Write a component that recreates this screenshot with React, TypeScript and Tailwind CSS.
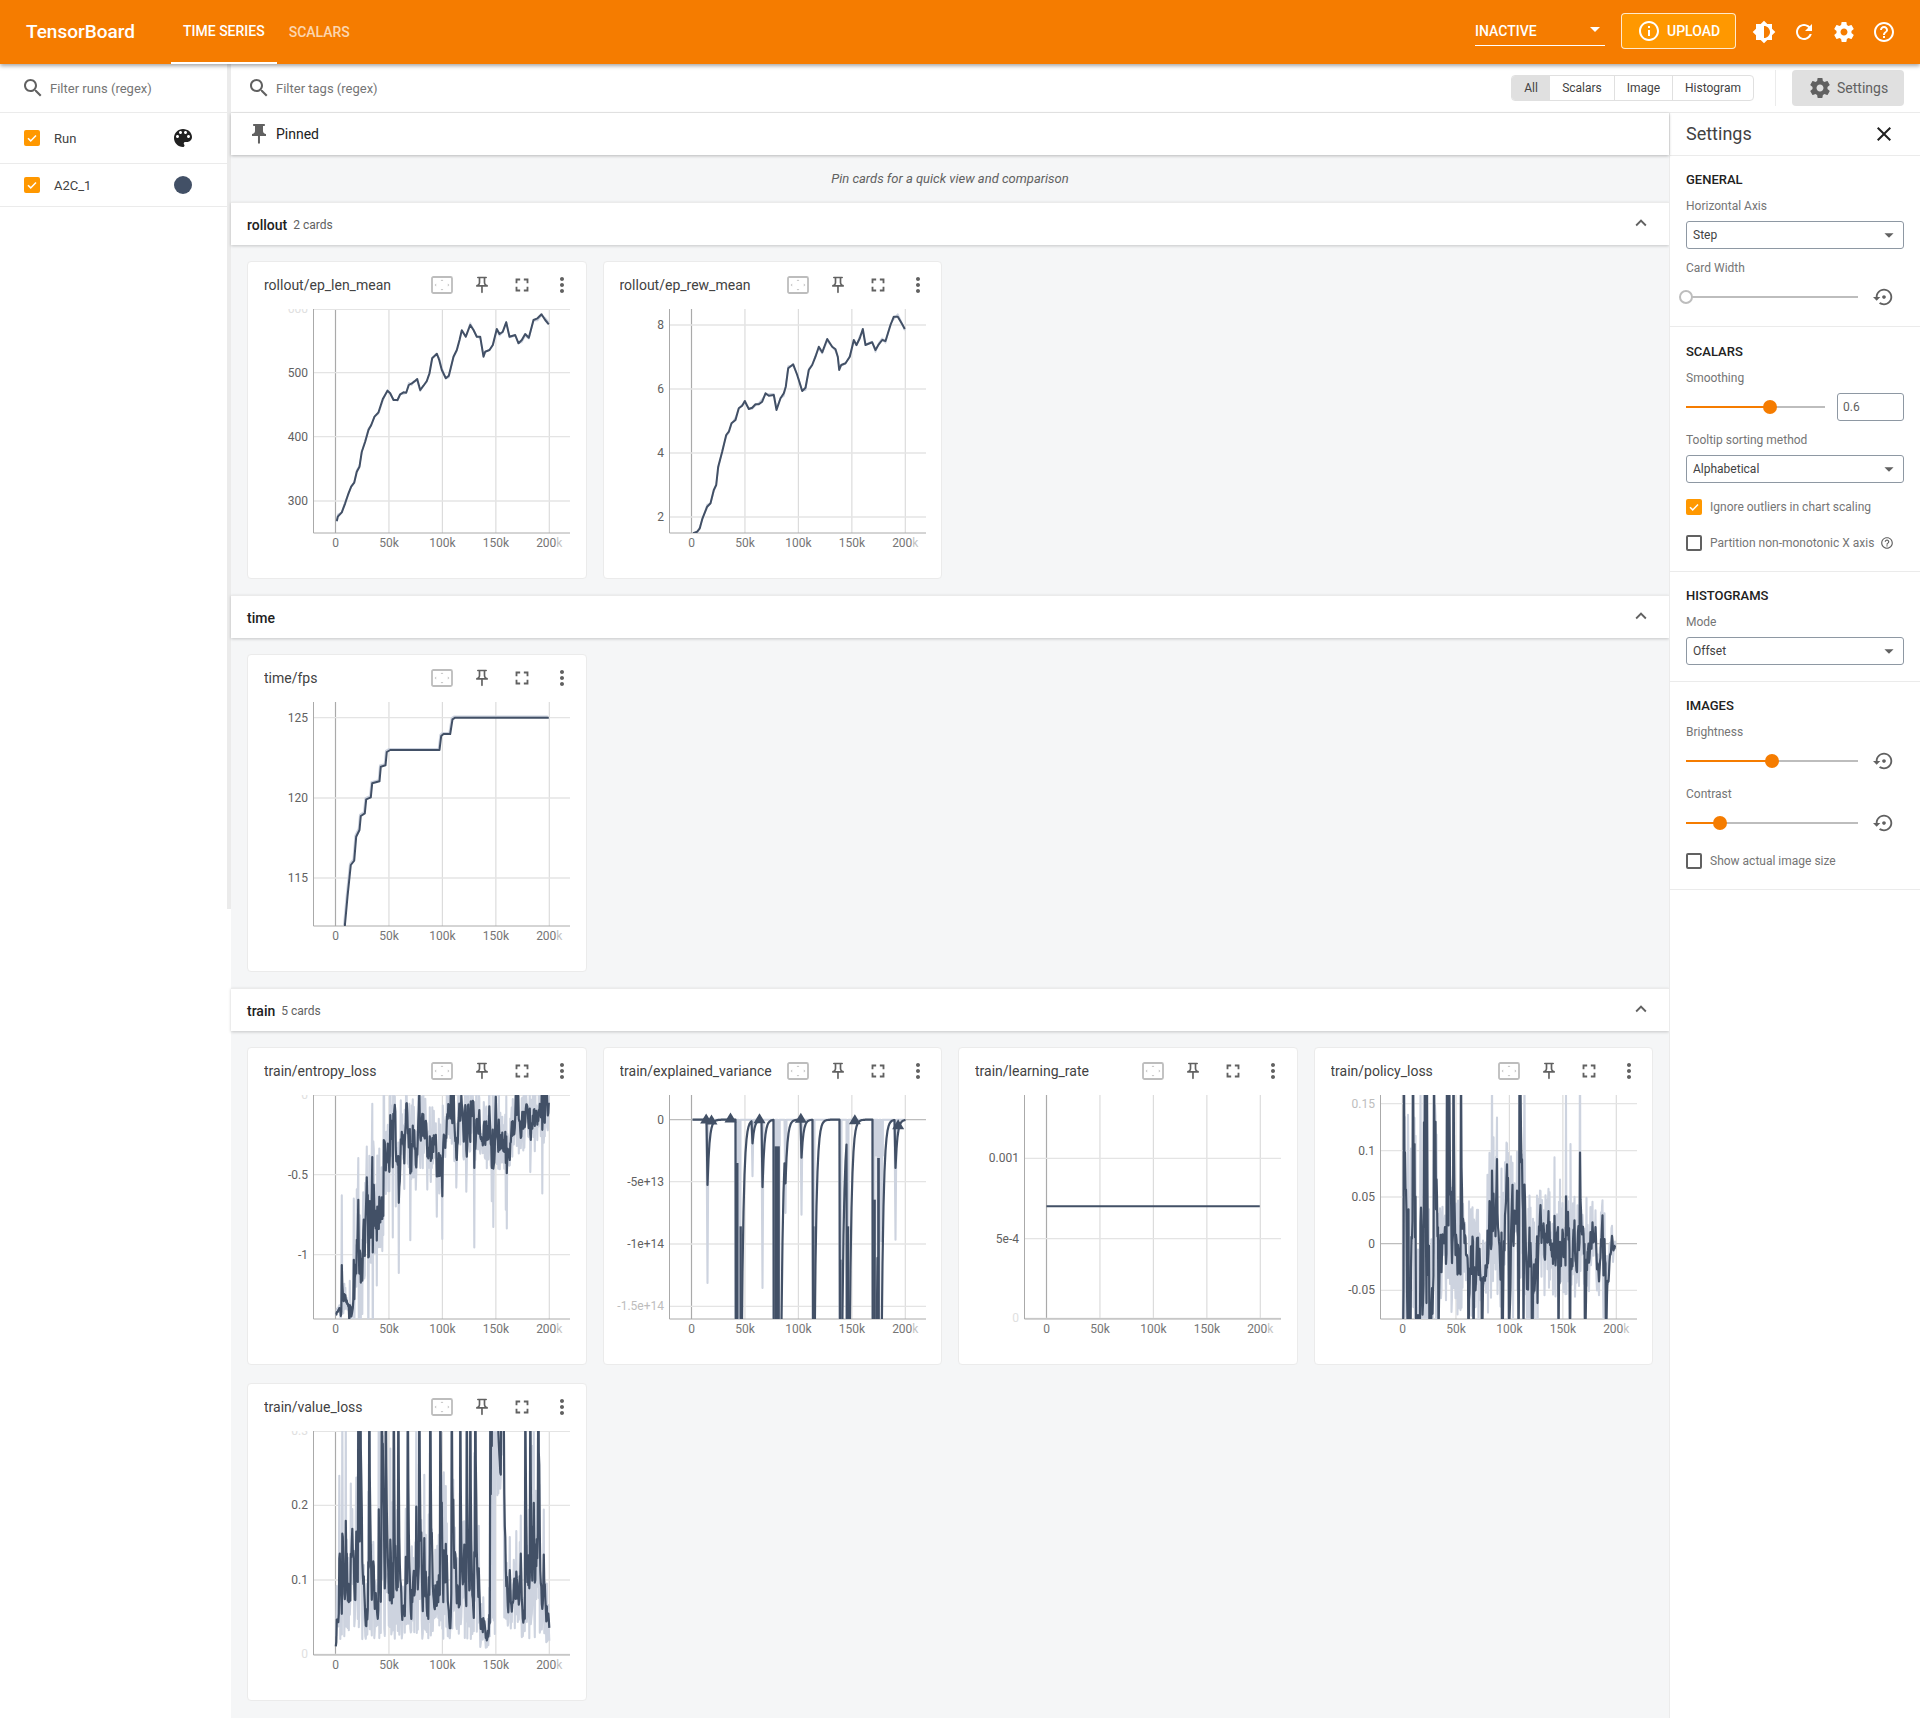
import { ReactNode } from 'react'

const ICONS = {
  search: 'M15.5 14h-.79l-.28-.27C15.41 12.59 16 11.11 16 9.5 16 5.91 13.09 3 9.5 3S3 5.91 3 9.5 5.91 16 9.5 16c1.61 0 3.09-.59 4.23-1.57l.27.28v.79l5 4.99L20.49 19l-4.99-5zm-6 0C7.01 14 5 11.99 5 9.5S7.01 5 9.5 5 14 7.01 14 9.5 11.99 14 9.5 14z',
  palette: 'M12 3c-4.97 0-9 4.03-9 9s4.03 9 9 9c.83 0 1.5-.67 1.5-1.5 0-.39-.15-.74-.39-1.01-.23-.26-.38-.61-.38-.99 0-.83.67-1.5 1.5-1.5H16c2.76 0 5-2.24 5-5 0-4.42-4.03-8-9-8zm-5.5 9c-.83 0-1.5-.67-1.5-1.5S5.67 9 6.5 9 8 9.67 8 10.5 7.33 12 6.5 12zm3-4C8.67 8 8 7.33 8 6.5S8.67 5 9.5 5s1.5.67 1.5 1.5S10.33 8 9.5 8zm5 0c-.83 0-1.5-.67-1.5-1.5S13.67 5 14.5 5s1.5.67 1.5 1.5S15.33 8 14.5 8zm3 4c-.83 0-1.5-.67-1.5-1.5S16.67 9 17.5 9s1.5.67 1.5 1.5-.67 1.5-1.5 1.5z',
  pin: 'M16 9V4h1c.55 0 1-.45 1-1s-.45-1-1-1H7c-.55 0-1 .45-1 1s.45 1 1 1h1v5c0 1.66-1.34 3-3 3v2h5.97v7l1 1 1-1v-7H19v-2c-1.66 0-3-1.34-3-3z',
  pinOutline: 'M14 4v5c0 1.12.37 2.16 1 3H9c.65-.86 1-1.9 1-3V4h4m3-2H7c-.55 0-1 .45-1 1s.45 1 1 1h1v5c0 1.66-1.34 3-3 3v2h5.97v7l1 1 1-1v-7H19v-2c-1.66 0-3-1.34-3-3V4h1c.55 0 1-.45 1-1s-.45-1-1-1z',
  fullscreen: 'M7 14H5v5h5v-2H7v-3zm-2-4h2V7h3V5H5v5zm12 7h-3v2h5v-5h-2v3zM14 5v2h3v3h2V5h-5z',
  more: 'M12 8c1.1 0 2-.9 2-2s-.9-2-2-2-2 .9-2 2 .9 2 2 2zm0 2c-1.1 0-2 .9-2 2s.9 2 2 2 2-.9 2-2-.9-2-2-2zm0 6c-1.1 0-2 .9-2 2s.9 2 2 2 2-.9 2-2-.9-2-2-2z',
  expandLess: 'M12 8l-6 6 1.41 1.41L12 10.83l4.59 4.58L18 14z',
  close: 'M19 6.41L17.59 5 12 10.59 6.41 5 5 6.41 10.59 12 5 17.59 6.41 19 12 13.41 17.59 19 19 17.59 13.41 12z',
  settings: 'M19.43 12.98c.04-.32.07-.64.07-.98s-.03-.66-.07-.98l2.11-1.65c.19-.15.24-.42.12-.64l-2-3.46c-.12-.22-.39-.3-.61-.22l-2.49 1c-.52-.4-1.08-.73-1.69-.98l-.38-2.65C14.46 2.18 14.25 2 14 2h-4c-.25 0-.46.18-.49.42l-.38 2.65c-.61.25-1.17.59-1.69.98l-2.49-1c-.23-.09-.49 0-.61.22l-2 3.46c-.13.22-.07.49.12.64l2.11 1.65c-.04.32-.07.65-.07.98s.03.66.07.98l-2.11 1.65c-.19.15-.24.42-.12.64l2 3.46c.12.22.39.3.61.22l2.49-1c.52.4 1.08.73 1.69.98l.38 2.65c.03.24.24.42.49.42h4c.25 0 .46-.18.49-.42l.38-2.65c.61-.25 1.17-.59 1.69-.98l2.49 1c.23.09.49 0 .61-.22l2-3.46c.12-.22.07-.49-.12-.64l-2.11-1.65zM12 15.5c-1.93 0-3.5-1.57-3.5-3.5s1.57-3.5 3.5-3.5 3.5 1.57 3.5 3.5-1.57 3.5-3.5 3.5z',
  refresh: 'M17.65 6.35C16.2 4.9 14.21 4 12 4c-4.42 0-7.99 3.58-7.99 8s3.57 8 7.99 8c3.73 0 6.84-2.55 7.73-6h-2.08c-.82 2.33-3.04 4-5.65 4-3.31 0-6-2.69-6-6s2.69-6 6-6c1.66 0 3.14.69 4.22 1.78L13 11h7V4l-2.35 2.35z',
  help: 'M11 18h2v-2h-2v2zm1-16C6.48 2 2 6.48 2 12s4.48 10 10 10 10-4.48 10-10S17.52 2 12 2zm0 18c-4.41 0-8-3.59-8-8s3.59-8 8-8 8 3.59 8 8-3.59 8-8 8zm0-14c-2.21 0-4 1.79-4 4h2c0-1.1.9-2 2-2s2 .9 2 2c0 2-3 1.75-3 5h2c0-2.25 3-2.5 3-5 0-2.21-1.79-4-4-4z',
  brightness: 'M20 15.31L23.31 12 20 8.69V4h-4.69L12 .69 8.69 4H4v4.69L.69 12 4 15.31V20h4.69L12 23.31 15.31 20H20v-4.69zM12 18V6c3.31 0 6 2.69 6 6s-2.69 6-6 6z',
  info: 'M11 17h2v-6h-2v6zm1-15C6.48 2 2 6.48 2 12s4.48 10 10 10 10-4.48 10-10S17.52 2 12 2zm0 18c-4.41 0-8-3.59-8-8s3.59-8 8-8 8 3.59 8 8-3.59 8-8 8zM11 9h2V7h-2v2z',
  reset: 'M14 12c0-1.1-.9-2-2-2s-2 .9-2 2 .9 2 2 2 2-.9 2-2zm-2-9c-4.97 0-9 4.03-9 9H0l4 4 4-4H5c0-3.87 3.13-7 7-7s7 3.13 7 7-3.13 7-7 7c-1.51 0-2.91-.49-4.06-1.3l-1.42 1.44C8.04 20.3 9.94 21 12 21c4.97 0 9-4.03 9-9s-4.03-9-9-9z',
  caret: 'M7 10l5 5 5-5z',
}

function Icon({ name, size = 24, className = '' }: { name: keyof typeof ICONS; size?: number; className?: string }) {
  return (
    <svg width={size} height={size} viewBox="0 0 24 24" className={`shrink-0 fill-current ${className}`}>
      <path d={ICONS[name]} />
    </svg>
  )
}

function FitIcon() {
  return (
    <svg width="22" height="18" viewBox="0 0 22 18" className="shrink-0">
      <rect x="1" y="1" width="20" height="16" rx="1.5" fill="none" stroke="#bdbdbd" strokeWidth="1.8" />
      <path d="M11 3.4l1.4 1.6h-2.8zM11 14.6l1.4-1.6h-2.8zM3.6 9l1.6-1.4v2.8zM18.4 9l-1.6-1.4v2.8z" fill="#c4c4c4" />
    </svg>
  )
}

/* ---- chart data, read off the reference in 3x crop coordinates ---- */

type Pt = [number, number]
type Tick = { label: string; zy: number; tone?: 'faded' | 'ghost'; strong?: boolean }
type Bar = [number, number, number, number]
type ChartDef = {
  title: string
  zero: number
  top: number
  ticks: Tick[]
  raw?: Pt[]
  line: Pt[]
  width?: number
  markers?: Pt[]
  lightBars?: Bar[]
  darkBars?: Bar[]
}

function rng(seed: number) {
  let a = seed
  return () => {
    a |= 0
    a = (a + 0x6d2b79f5) | 0
    let t = Math.imul(a ^ (a >>> 15), 1 | a)
    t = (t + Math.imul(t ^ (t >>> 7), 61 | t)) ^ t
    return ((t ^ (t >>> 14)) >>> 0) / 4294967296
  }
}

function interp(table: Pt[], x: number) {
  if (x <= table[0][0]) return table[0][1]
  for (let i = 1; i < table.length; i++) {
    if (x <= table[i][0]) {
      const [x0, y0] = table[i - 1]
      const [x1, y1] = table[i]
      return y0 + ((y1 - y0) * (x - x0)) / (x1 - x0)
    }
  }
  return table[table.length - 1][1]
}

function ema(raw: Pt[], start = raw[0][1]): Pt[] {
  let s = start
  return raw.map(([x, y]) => {
    s = 0.6 * s + 0.4 * y
    return [x, s] as Pt
  })
}

function jitter(line: Pt[], seed: number, amp: number): Pt[] {
  const r = rng(seed)
  return line.map(([x, y]) => [x, y + (r() - 0.5) * amp] as Pt)
}

const lenMean: Pt[] = [[290,798],[293,785],[305,772],[315,745],[325,715],[333,695],[342,683],[350,650],[358,635],[365,590],[375,560],[385,525],[393,510],[403,485],[415,472],[428,432],[442,407],[450,415],[460,435],[472,435],[480,418],[490,412],[498,413],[506,390],[515,385],[522,380],[531,372],[540,405],[550,392],[560,378],[568,355],[576,310],[590,296],[597,315],[605,345],[617,370],[626,362],[640,305],[650,285],[658,255],[665,226],[677,245],[690,210],[700,225],[710,245],[720,245],[730,305],[735,290],[748,285],[758,270],[770,222],[778,237],[788,230],[798,202],[808,245],[825,240],[835,265],[845,255],[855,237],[866,248],[880,195],[892,190],[904,178],[915,195],[926,208]]

const rewMean: Pt[] = [[278,835],[290,830],[298,820],[306,790],[320,755],[330,745],[340,705],[347,690],[353,635],[365,590],[377,540],[385,530],[393,505],[405,495],[415,460],[425,452],[433,438],[445,462],[455,458],[465,448],[475,448],[485,440],[495,415],[505,422],[520,420],[528,465],[540,430],[550,415],[556,395],[563,340],[578,328],[590,360],[605,408],[615,398],[625,345],[635,330],[645,305],[655,275],[665,292],[680,252],[695,275],[705,283],[712,305],[716,345],[722,330],[735,325],[748,305],[760,255],[768,270],[778,250],[787,222],[795,270],[815,262],[825,285],[835,268],[845,255],[855,258],[870,210],[880,185],[892,185],[905,208],[913,222]]

const fps: Pt[] = [[314,829],[322,740],[332,645],[342,632],[348,560],[358,540],[362,498],[374,490],[378,448],[392,442],[396,400],[418,394],[422,350],[436,346],[440,306],[450,300],[598,300],[603,258],[610,252],[630,252],[637,208],[645,203],[926,203]]

function entropyRaw(): Pt[] {
  const r = rng(11)
  const center: Pt[] = [[286,825],[310,800],[335,800],[345,600],[360,700],[380,540],[400,460],[425,480],[435,365],[450,300],[470,335],[490,325],[520,295],[560,285],[590,360],[605,315],[615,245],[650,255],[665,310],[700,245],[760,290],[800,290],[830,245],[880,235],[926,205]]
  const amp: Pt[] = [[286,12],[330,40],[345,170],[430,160],[520,120],[926,85]]
  const up = [305, 341, 380, 397, 427]
  const out: Pt[] = []
  for (let x = 287; x <= 926; x += 1.5) {
    const a = interp(amp, x)
    let y = interp(center, x) + (r() - 0.5) * 2.2 * a
    if (r() < 0.08) y += a * (1.2 + r() * 1.8)
    if (r() < 0.08) y -= a * (1 + r())
    if (up.some(u => Math.abs(u - x) < 1)) y = x < 345 ? y - 330 : y - 300
    out.push([x, y])
  }
  return out
}

function varianceRaw(): Pt[] {
  const base = 240
  const spikes: Pt[] = [[320,490],[408,6000],[417,4000],[455,170],[485,505],[522,8000],[534,6000],[555,280],[603,285],[639,3000],[720,4000],[741,5000],[820,8000],[833,6000],[842,365],[885,360]]
  const out: Pt[] = []
  for (let x = 276; x <= 915; x += 3) {
    const s = spikes.find(([sx]) => Math.abs(sx - x) < 1.5)
    out.push([x, base + (s ? s[1] : 0)])
  }
  return out
}

function policyRaw(): Pt[] {
  const r = rng(7)
  const amp: Pt[] = [[277,480],[370,420],[392,220],[460,170],[520,150],[540,260],[680,260],[692,150],[880,130],[900,100],[915,6]]
  const center: Pt[] = [[277,590],[380,612],[460,650],[520,660],[540,570],[600,600],[680,590],[700,620],[900,625],[915,612]]
  const up = [281,308,345,350,372,410,416,430,452,628,630,546,560,593,655,715,750,768,810]
  const down = [300,318,358,385,475,490,515,575,597,625,640,665,745,780,825,888]
  const out: Pt[] = []
  for (let x = 277; x <= 916; x += 1.5) {
    const a = interp(amp, x)
    let y = interp(center, x) + (r() - 0.5) * 2.2 * a
    if (r() < 0.1) y += (r() - 0.5) * 4 * a
    if (up.some(u => Math.abs(u - x) < 1)) y = x < 460 || Math.abs(x - 629) < 2 ? -800 : y - 320
    if (down.some(u => Math.abs(u - x) < 1)) y = 1400
    out.push([x, y])
  }
  return out
}

function valueRaw(): Pt[] {
  const r = rng(23)
  const bottom = 838
  const spikes = [355,360,388,425,437,461,475,503,537,570,600,635,660,680,690,705,750,753,756,759,762,765,855,870,895]
  const out: Pt[] = []
  for (let x = 287; x <= 928; x += 1.5) {
    let h = 45 + -Math.log(1 - r()) * 160
    if (x > 720 && x < 745) h *= 0.4
    if (x > 765 && x < 792) h += 420
    if (x > 900) h *= 1 - (x - 900) / 40
    if (spikes.some(s => Math.abs(s - x) < 1)) h = 1700
    out.push([x, bottom - h])
  }
  return out
}

const entropy = entropyRaw()
const variance = varianceRaw()
const policy = policyRaw()
const valueLoss = valueRaw()

const CHARTS: Record<string, ChartDef> = {
  lenMean: {
    title: 'rollout/ep_len_mean', zero: 286, top: 162,
    ticks: [{ label: '600', zy: 163, tone: 'ghost' }, { label: '500', zy: 353 }, { label: '400', zy: 545 }, { label: '300', zy: 738 }],
    raw: jitter(lenMean, 3, 14), line: lenMean,
  },
  rewMean: {
    title: 'rollout/ep_rew_mean', zero: 273, top: 162,
    ticks: [{ label: '8', zy: 210 }, { label: '6', zy: 402 }, { label: '4', zy: 594 }, { label: '2', zy: 786 }],
    raw: jitter(rewMean, 5, 16), line: rewMean,
  },
  fps: {
    title: 'time/fps', zero: 286, top: 156,
    ticks: [{ label: '125', zy: 203 }, { label: '120', zy: 444 }, { label: '115', zy: 684 }],
    raw: fps.map(([x, y]) => [x - 3, y - 4] as Pt), line: fps,
  },
  entropy: {
    title: 'train/entropy_loss', zero: 286, top: 166,
    ticks: [{ label: '0', zy: 167, tone: 'ghost' }, { label: '-0.5', zy: 405 }, { label: '-1', zy: 645 }],
    raw: entropy, line: ema(entropy), width: 2.2,
  },
  variance: {
    title: 'train/explained_variance', zero: 273, top: 166,
    ticks: [{ label: '0', zy: 240, strong: true }, { label: '-5e+13', zy: 426 }, { label: '-1e+14', zy: 613 }, { label: '-1.5e+14', zy: 800, tone: 'faded' }],
    raw: variance, line: ema(variance, 240), width: 2.2,
    markers: [[317,238],[333,241],[390,235],[477,237],[601,236],[763,240],[893,255]],
    lightBars: [[405,420,240,370],[525,540,240,320],[820,850,240,350]],
    darkBars: [[406,414,370,838],[417,424,560,838],[522,538,320,838],[638,642,560,838],[718,723,660,838],[739,746,560,838],[818,826,480,838],[830,838,355,838]],
  },
  lr: {
    title: 'train/learning_rate', zero: 289, top: 166,
    ticks: [{ label: '0.001', zy: 356 }, { label: '5e-4', zy: 597 }, { label: '0', zy: 836, tone: 'ghost' }],
    line: [[289,500],[929,500]], width: 2,
  },
  policy: {
    title: 'train/policy_loss', zero: 277, top: 166,
    ticks: [{ label: '0.15', zy: 192, tone: 'faded' }, { label: '0.1', zy: 333 }, { label: '0.05', zy: 472 }, { label: '0', zy: 612, strong: true }, { label: '-0.05', zy: 752 }],
    raw: policy, line: ema(policy), width: 2.2,
  },
  value: {
    title: 'train/value_loss', zero: 286, top: 168,
    ticks: [{ label: '0.3', zy: 169, tone: 'ghost' }, { label: '0.2', zy: 391 }, { label: '0.1', zy: 615 }, { label: '0', zy: 838, tone: 'ghost' }],
    raw: valueLoss, line: ema(valueLoss, 838), width: 2.2,
  },
}

const XTICKS = ['0', '50k', '100k', '150k', '200k']
const PLOT_L = 65.5
const PLOT_R = 322
const PLOT_B = 224
const ZERO_X = 87.5
const STEP = 53.45
const TICK_FILL = { faded: '#bdbdbd', ghost: '#e0e0e0' }

function Chart({ def, id }: { def: ChartDef; id: string }) {
  const px = (zx: number) => ZERO_X + (zx - def.zero) / 3
  const py = (zy: number) => (zy - def.top) / 3
  const toPath = (pts: Pt[]) => pts.map(([x, y]) => `${px(x).toFixed(1)},${py(y).toFixed(1)}`).join(' ')
  const bar = ([x0, x1, y0, y1]: Bar, fill: string) => (
    <rect key={`${x0}-${y0}`} x={px(x0)} y={py(y0)} width={(x1 - x0) / 3} height={(y1 - y0) / 3} fill={fill} />
  )
  return (
    <svg className="mt-0.5 block h-[267px] w-full font-['Roboto',sans-serif]">
      <defs>
        <clipPath id={id}>
          <rect x={PLOT_L} y="0" width={PLOT_R - PLOT_L} height={PLOT_B} />
        </clipPath>
      </defs>
      {XTICKS.map((_, i) => (
        <line key={i} x1={ZERO_X + i * STEP} x2={ZERO_X + i * STEP} y1="0" y2={PLOT_B} stroke={i === 0 ? '#aaaaaa' : '#dcdcdc'} strokeWidth="1.2" />
      ))}
      {def.ticks.map(t => (
        <g key={t.label}>
          <line x1={PLOT_L} x2={PLOT_R} y1={py(t.zy)} y2={py(t.zy)} stroke={t.strong ? '#bdbdbd' : '#e4e4e4'} strokeWidth="1.4" />
          <text x="60" y={py(t.zy) + 4} textAnchor="end" fontSize="12" fill={t.tone ? TICK_FILL[t.tone] : '#616161'}>{t.label}</text>
        </g>
      ))}
      <line x1={PLOT_L} x2={PLOT_L} y1="0" y2={PLOT_B} stroke="#aaaaaa" />
      <line x1={PLOT_L} x2={PLOT_R} y1={PLOT_B} y2={PLOT_B} stroke="#aaaaaa" />
      <g clipPath={`url(#${id})`}>
        {def.lightBars?.map(b => bar(b, '#cdd3df'))}
        {def.raw && <polyline points={toPath(def.raw)} fill="none" stroke="#cdd3df" strokeWidth={def.width ? 2.1 : 1.6} strokeLinejoin="round" />}
        {def.darkBars?.map(b => bar(b, '#425066'))}
        <polyline points={toPath(def.line)} fill="none" stroke="#425066" strokeWidth={def.width ?? 2} strokeLinejoin="round" />
        {def.markers?.map(([x, y]) => (
          <path key={x} d={`M${px(x)} ${py(y) - 5.5}l6 10h-12z`} fill="#425066" />
        ))}
      </g>
      {XTICKS.map((label, i) => (
        <text key={label} x={ZERO_X + i * STEP} y="238" textAnchor="middle" fontSize="12" fill="#757575">
          {i === 4 ? (<>200<tspan fill="#c4c4c4">k</tspan></>) : label}
        </text>
      ))}
    </svg>
  )
}

function Card({ id }: { id: keyof typeof CHARTS }) {
  const def = CHARTS[id]
  return (
    <div className="h-[318px] rounded border border-[#ebebeb] bg-white">
      <div className="flex h-[45px] items-center pl-4 pr-[3.5px]">
        <div className="min-w-0 flex-1 truncate text-sm text-[#424242]">{def.title}</div>
        <div className="flex w-10 justify-center"><FitIcon /></div>
        <div className="flex w-10 justify-center text-[#616161]"><Icon name="pinOutline" size={20} /></div>
        <div className="flex w-10 justify-center text-[#616161]"><Icon name="fullscreen" size={22} /></div>
        <div className="flex w-10 justify-center text-[#616161]"><Icon name="more" size={24} /></div>
      </div>
      <Chart def={def} id={`clip-${id}`} />
    </div>
  )
}

function Group({ name, count, ids }: { name: string; count?: string; ids: (keyof typeof CHARTS)[] }) {
  return (
    <section>
      <div className="flex h-[43px] items-center border-t border-[#ebebeb] bg-white pl-4 pr-[17px] shadow-[0_1px_3px_rgba(0,0,0,0.2)]">
        <span className="pt-0.5 text-sm font-medium text-[#212121]">{name}</span>
        {count && <span className="ml-1.5 pt-0.5 text-xs text-[#616161]">{count}</span>}
        <Icon name="expandLess" size={22} className="mb-[3px] ml-auto text-[#616161]" />
      </div>
      <div className="grid grid-cols-4 gap-x-4 gap-y-[18px] p-4">
        {ids.map(id => <Card key={id} id={id} />)}
      </div>
    </section>
  )
}

function Checkbox({ checked = false }: { checked?: boolean }) {
  if (checked) {
    return (
      <span className="flex h-4 w-4 shrink-0 items-center justify-center rounded-[2px] bg-[#ff9800]">
        <svg width="12" height="12" viewBox="0 0 12 12"><path d="M2 6.2l2.7 2.7L10 3.4" fill="none" stroke="#fff" strokeWidth="1.5" /></svg>
      </span>
    )
  }
  return <span className="h-4 w-4 shrink-0 rounded-[2px] border-2 border-[#616161] bg-white" />
}

function Select({ value }: { value: string }) {
  return (
    <div className="flex h-7 items-center justify-between rounded-[3px] border border-[#8e98a3] pl-[6px] pr-[3px] text-xs text-[#424242]">
      <span>{value}</span>
      <Icon name="caret" size={22} className="text-[#616161]" />
    </div>
  )
}

function Slider({ thumb, width, empty = false }: { thumb: number; width: string; empty?: boolean }) {
  return (
    <div className={`relative h-0.5 bg-[#bdbdbd] ${width}`}>
      <div className="absolute left-0 top-0 h-0.5 bg-[#f57c00]" style={{ width: thumb }} />
      {empty ? (
        <div className="absolute -left-[7px] -top-[6px] h-[14px] w-[14px] rounded-full border-2 border-[#bdbdbd] bg-white" />
      ) : (
        <div className="absolute -top-[6px] h-[14px] w-[14px] rounded-full bg-[#f57c00]" style={{ left: thumb - 7 }} />
      )}
    </div>
  )
}

function SliderRow({ thumb, empty }: { thumb: number; empty?: boolean }) {
  return (
    <div className="flex h-6 items-center">
      <Slider thumb={thumb} empty={empty} width="w-[172px]" />
      <Icon name="reset" size={22} className="ml-[15px] text-[#616161]" />
    </div>
  )
}

function SectionTitle({ children }: { children: ReactNode }) {
  return <div className="h-5 text-[13px] font-medium leading-5 text-[#212121]">{children}</div>
}

function Label({ children, className = '' }: { children: ReactNode; className?: string }) {
  return <div className={`h-4 text-xs leading-4 text-[#757575] ${className}`}>{children}</div>
}

function CheckRow({ checked, label, className = '', help }: { checked?: boolean; label: string; className?: string; help?: boolean }) {
  return (
    <div className={`flex h-4 items-center text-xs text-[#757575] ${className}`}>
      <Checkbox checked={checked} />
      <span className="ml-2">{label}</span>
      {help && <Icon name="help" size={14} className="ml-[6px] text-[#616161]" />}
    </div>
  )
}

function SettingsPanel() {
  return (
    <aside className="w-[251px] shrink-0 border-l border-[#ebebeb] bg-white">
      <div className="flex h-[42px] items-center justify-between pl-4 pr-[24px]">
        <span className="text-lg text-[#424242]">Settings</span>
        <Icon name="close" size={24} className="text-[#212121]" />
      </div>
      <div className="border-b border-t border-[#ebebeb] px-4 pb-[17px] pt-[14px]">
        <SectionTitle>GENERAL</SectionTitle>
        <Label className="mt-2">Horizontal Axis</Label>
        <div className="mt-[7px]"><Select value="Step" /></div>
        <Label className="mt-[11px]">Card Width</Label>
        <div className="mt-[9px]"><SliderRow thumb={0} empty /></div>
      </div>
      <div className="border-b border-[#ebebeb] px-4 pb-5 pt-[15px]">
        <SectionTitle>SCALARS</SectionTitle>
        <Label className="mt-2">Smoothing</Label>
        <div className="mt-[7px] flex h-7 items-center">
          <Slider thumb={84} width="w-[139px]" />
          <div className="ml-3 flex h-7 w-[67px] items-center rounded-[3px] border border-[#8e98a3] pl-[5px] text-xs text-[#616161]">0.6</div>
        </div>
        <Label className="mt-[11px]">Tooltip sorting method</Label>
        <div className="mt-[7px]"><Select value="Alphabetical" /></div>
        <CheckRow checked label="Ignore outliers in chart scaling" className="mt-4" />
        <CheckRow label="Partition non-monotonic X axis" className="mt-5" help />
      </div>
      <div className="border-b border-[#ebebeb] px-4 pb-4 pt-[14px]">
        <SectionTitle>HISTOGRAMS</SectionTitle>
        <Label className="mt-2">Mode</Label>
        <div className="mt-[7px]"><Select value="Offset" /></div>
      </div>
      <div className="border-b border-[#ebebeb] px-4 pb-5 pt-[14px]">
        <SectionTitle>IMAGES</SectionTitle>
        <Label className="mt-2">Brightness</Label>
        <div className="mt-[9px]"><SliderRow thumb={86} /></div>
        <Label className="mt-[13px]">Contrast</Label>
        <div className="mt-[9px]"><SliderRow thumb={34} /></div>
        <CheckRow label="Show actual image size" className="mt-[18px]" />
      </div>
    </aside>
  )
}

function HeaderBar() {
  return (
    <header className="relative z-10 flex h-16 shrink-0 items-center bg-[#f57c00] text-white shadow-[0_2px_4px_rgba(0,0,0,0.35)]">
      <div className="w-[171px] shrink-0 pl-[26px] text-[19px] font-medium">TensorBoard</div>
      <div className="flex h-full items-center border-b-2 border-white px-3 text-sm font-medium">TIME SERIES</div>
      <div className="flex h-full items-center px-3 text-sm font-medium text-white/70">SCALARS</div>
      <div className="ml-auto flex h-[27px] w-[130px] items-center justify-between border-b border-white pb-0.5 text-sm font-medium">
        <span>INACTIVE</span>
        <Icon name="caret" size={24} className="-mr-0.5 -mt-1" />
      </div>
      <div className="-mt-0.5 ml-4 flex h-9 w-[115px] items-center rounded border border-white/80 bg-[#ff9800] pl-[15px] text-sm font-medium">
        <Icon name="info" />
        <span className="ml-[6px]">UPLOAD</span>
      </div>
      <div className="ml-2 flex pr-4">
        <div className="flex w-10 justify-center"><Icon name="brightness" /></div>
        <div className="flex w-10 justify-center"><Icon name="refresh" /></div>
        <div className="flex w-10 justify-center"><Icon name="settings" /></div>
        <div className="flex w-10 justify-center"><Icon name="help" /></div>
      </div>
    </header>
  )
}

function TagFilters() {
  return (
    <div className="flex h-[26px] overflow-hidden rounded border border-[#e0e0e0] text-xs text-[#424242]">
      <div className="flex w-[38px] items-center justify-center bg-[#e0e0e0]">All</div>
      <div className="flex w-[65px] items-center justify-center border-r border-[#e0e0e0]">Scalars</div>
      <div className="flex w-[58px] items-center justify-center border-r border-[#e0e0e0]">Image</div>
      <div className="flex w-[80px] items-center justify-center">Histogram</div>
    </div>
  )
}

export default function App() {
  return (
    <div className="flex h-[1718px] flex-col overflow-hidden bg-white font-['Roboto',sans-serif]">
      <HeaderBar />
      <div className="flex min-h-0 flex-1">
        <nav className="w-[227px] shrink-0 bg-white text-[13px] text-[#424242]">
          <div className="flex h-[49px] items-center border-b border-[#ebebeb] pl-[21px]">
            <Icon name="search" size={24} className="text-[#616161]" />
            <span className="ml-[5px] pt-0.5 text-[13px] text-[#757575]">Filter runs (regex)</span>
          </div>
          <div className="flex h-[51px] items-center border-b border-[#ebebeb] pl-6">
            <Checkbox checked />
            <span className="ml-[14px] flex-1 pt-0.5">Run</span>
            <Icon name="palette" size={24} className="mr-8 text-[#212121]" />
          </div>
          <div className="flex h-[43px] items-center border-b border-[#ebebeb] pl-6">
            <Checkbox checked />
            <span className="ml-[14px] flex-1 pt-0.5">A2C_1</span>
            <span className="mr-[35px] h-[18px] w-[18px] rounded-full bg-[#425066]" />
          </div>
        </nav>
        <div className="h-[845px] w-1 shrink-0 bg-[#ebebeb]" />
        <div className="flex min-w-0 flex-1 flex-col">
          <div className="flex h-[49px] shrink-0 items-center border-b border-[#ebebeb] bg-white pl-4 pr-4">
            <Icon name="search" size={24} className="text-[#616161]" />
            <span className="ml-[5px] pt-0.5 text-[13px] text-[#757575]">Filter tags (regex)</span>
            <div className="ml-auto"><TagFilters /></div>
            <div className="ml-[21px] h-9 w-px bg-[#ebebeb]" />
            <div className="ml-4 flex h-9 w-[112px] items-center rounded bg-[#e0e0e0] pl-4 text-sm text-[#616161]">
              <Icon name="settings" size={24} />
              <span className="ml-[5px]">Settings</span>
            </div>
          </div>
          <div className="flex min-h-0 flex-1">
            <main className="min-w-0 flex-1 bg-[#f5f6f7]">
              <div className="relative flex h-[42px] items-center bg-white pl-4 shadow-[0_1px_3px_rgba(0,0,0,0.25)]">
                <Icon name="pin" size={24} className="text-[#616161]" />
                <span className="ml-[5px] text-sm text-[#212121]">Pinned</span>
              </div>
              <div className="flex h-[47px] items-center justify-center text-[13px] italic text-[#616161]">
                Pin cards for a quick view and comparison
              </div>
              <Group name="rollout" count="2 cards" ids={['lenMean', 'rewMean']} />
              <Group name="time" ids={['fps']} />
              <Group name="train" count="5 cards" ids={['entropy', 'variance', 'lr', 'policy', 'value']} />
            </main>
            <SettingsPanel />
          </div>
        </div>
      </div>
    </div>
  )
}
